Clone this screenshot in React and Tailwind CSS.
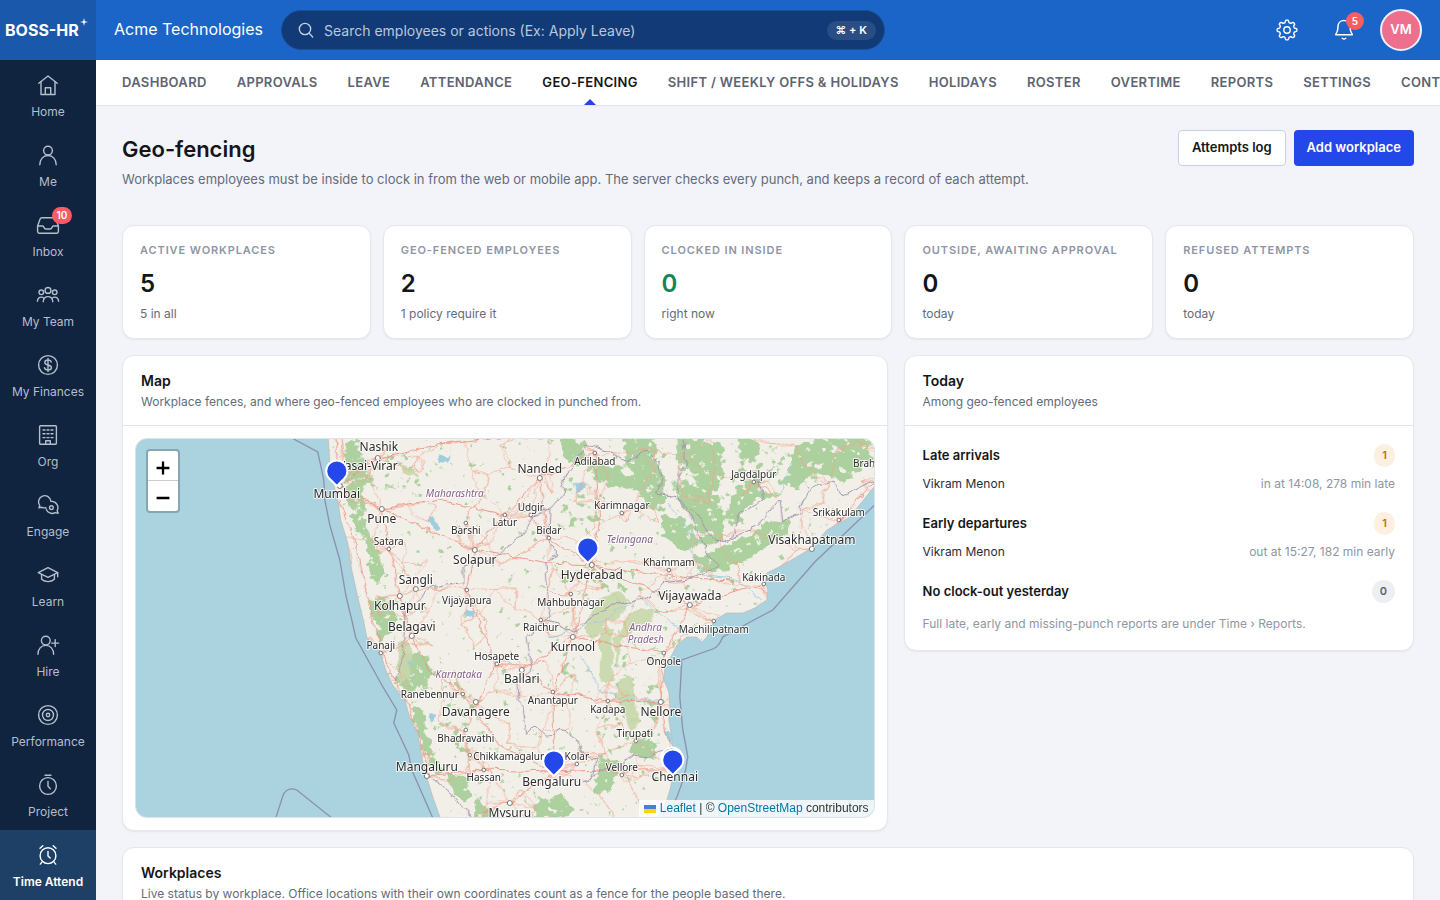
const SIDEBAR = [
  { label: 'Home', icon: 'home' },
  { label: 'Me', icon: 'me' },
  { label: 'Inbox', icon: 'inbox', badge: 10 },
  { label: 'My Team', icon: 'team' },
  { label: 'My Finances', icon: 'finances' },
  { label: 'Org', icon: 'org' },
  { label: 'Engage', icon: 'engage' },
  { label: 'Learn', icon: 'learn' },
  { label: 'Hire', icon: 'hire' },
  { label: 'Performance', icon: 'performance' },
  { label: 'Project', icon: 'project' },
  { label: 'Time Attend', icon: 'time', active: true },
];

const TABS = [
  'Dashboard', 'Approvals', 'Leave', 'Attendance', 'Geo-fencing', 'Shift / Weekly Offs & Holidays',
  'Holidays', 'Roster', 'Overtime', 'Reports', 'Settings', 'Contractors',
];

const STATS = [
  { label: 'Active workplaces', value: 5, note: '5 in all' },
  { label: 'Geo-fenced employees', value: 2, note: '1 policy require it' },
  { label: 'Clocked in inside', value: 0, note: 'right now', good: true },
  { label: 'Outside, awaiting approval', value: 0, note: 'today' },
  { label: 'Refused attempts', value: 0, note: 'today' },
];

const TODAY = [
  { title: 'Late arrivals', count: 1, rows: [{ name: 'Vikram Menon', detail: 'in at 14:08, 278 min late' }] },
  { title: 'Early departures', count: 1, rows: [{ name: 'Vikram Menon', detail: 'out at 15:27, 182 min early' }] },
  { title: 'No clock-out yesterday', count: 0, rows: [] },
];

const ICONS = {
  home: (
    <>
      <path d="M2.8 10.2 12 3l9.2 7.2" />
      <path d="M5 8.8v12.7h14V8.8" />
      <path d="M9.3 21.3v-6.5h5.4v6.5" />
    </>
  ),
  me: (
    <>
      <circle cx="12" cy="7.6" r="4.4" />
      <path d="M3.8 21.8c0-5.4 3.3-9.3 8.2-9.3s8.2 3.9 8.2 9.3" />
    </>
  ),
  inbox: (
    <>
      <path d="M1.6 13 4 6.2C4.4 5 5 4.7 6 4.7h12c1 0 1.6.3 2 1.5l2.4 6.8v5.6c0 1-.6 1.6-1.6 1.6H3.2c-1 0-1.6-.6-1.6-1.6z" />
      <path d="M1.6 13h5c.9 0 1 .5 1.3 1.3.4 1.2 1.1 1.7 2.1 1.7h4c1 0 1.7-.5 2.1-1.7.3-.8.4-1.3 1.3-1.3h5" />
    </>
  ),
  team: (
    <>
      <circle cx="12" cy="7.4" r="2.9" />
      <circle cx="5.3" cy="9.3" r="2.3" />
      <circle cx="18.7" cy="9.3" r="2.3" />
      <path d="M7.2 18.8c.3-3.2 2-5.2 4.8-5.2s4.5 2 4.8 5.2" />
      <path d="M1.4 18.3c.2-2.5 1.7-4.2 3.9-4.2 1.1 0 1.9.4 2.6 1.1M22.6 18.3c-.2-2.5-1.7-4.2-3.9-4.2-1.1 0-1.9.4-2.6 1.1" />
    </>
  ),
  finances: (
    <>
      <circle cx="12" cy="12" r="9.4" />
      <path d="M12 5.5v13M15.2 9c-.3-1.3-1.5-2-3.2-2-1.8 0-3.2.9-3.2 2.4 0 3.4 6.6 1.7 6.6 5.1 0 1.6-1.5 2.5-3.4 2.5s-3.2-.8-3.5-2.3" />
    </>
  ),
  org: (
    <>
      <rect x="3.6" y="2.7" width="16.8" height="18.6" rx="1" />
      <path d="M7 7h2M11 7h2M15 7h2M7 10.8h2M11 10.8h2M15 10.8h2M7 14.6h2M11 14.6h2M15 14.6h2" />
      <path d="M9.7 21.3v-3.6h4.6v3.6" />
    </>
  ),
  engage: (
    <>
      <path d="M14.9 8.3A6.2 6.2 0 1 0 3.8 12.6L2.9 14.8l3-.5c1.2.6 2.7.7 4 .3" />
      <path d="M15.3 8.4a6.2 6.2 0 0 1 5.8 9.2l1.1 2.6-3.1-.6a6.2 6.2 0 0 1-9-3.7" />
      <circle cx="15.4" cy="14.6" r="1.9" />
    </>
  ),
  learn: (
    <>
      <path d="M2.3 9.7 12 4.7l9.7 5L12 14.3z" />
      <path d="M5.6 11.5v4.8c3.4 3.1 9.4 3.1 12.8 0v-4.8M21.7 9.7v4" />
    </>
  ),
  hire: (
    <>
      <circle cx="9.8" cy="7.6" r="4.4" />
      <path d="M2 21.2c0-5.1 3.1-8.8 7.8-8.8s7.8 3.7 7.8 8.8M19.2 6.6v7M15.7 10.1h7" />
    </>
  ),
  performance: (
    <>
      <circle cx="12" cy="12" r="9.4" />
      <circle cx="12" cy="12" r="5.5" />
      <circle cx="12" cy="12" r="1.7" />
    </>
  ),
  project: (
    <>
      <circle cx="12" cy="13" r="8.4" />
      <path d="M9 2.2h6M12 8.5v4.7l2.3 2.6" />
    </>
  ),
  time: (
    <>
      <circle cx="12" cy="12.7" r="7.9" />
      <path d="M12 8.5v4.4l2.2 2.2M4 5.3l2.8-2.5M20 5.3l-2.8-2.5M6.3 18.6l-2 2.5M17.7 18.6l2 2.5" />
    </>
  ),
};

// Map drawing, in the map's own 738 x 378 space shifted by MAP_ORIGIN
const MAP_ORIGIN = 'translate(-136 -439)';

const LAND =
  'M328 430L330 463 334 485 338 500 341 520 348 543 352 570 358 597 364 622 367 637 377 647 382 657 386 670 393 685 405 700 410 717 418 733 422 757 427 777 433 797 443 825' +
  'L654 825 667 800 670 790 675 770 673 747 671 733 669 720 670 707 669 692 664 680 665 667 672 655 677 645 687 637 697 637 702 642 707 637 713 623 718 618 727 613 743 613 755 608 767 600 768 590 765 582 767 573 783 565 812 548 827 530 850 517 862 502 880 480V430Z';

const MARITIME = [
  'M292 438 318 452 324 480 325 500 330 525 340 560 346 595 350 612 352 620 356 638 382 685 397 710 394 723 409 755 412 770 433 818',
  'M276 818 283 796Q287 786 297 790L332 818',
  'M876 504 815 562 773 610 754 620 723 637Q719 647 713 649L682 660 680 697 683 730Q686 745 688 757 685 782 672 808',
];

const BORDERS = [
  'M585 443 583 452 567 472 562 487 565 493 550 510 533 515 520 538 510 545 497 557 482 563 463 567 463 582 445 583 430 588 420 600 404 613 403 640 402 667 393 681',
  'M550 510 549 540 556 556 545 563 546 580 548 597 550 617 533 633 527 637 530 655 533 670 517 683 518 697 523 707 527 735 536 726 550 737 560 728 577 740 580 753 597 757 593 780 583 784',
  'M548 620 575 632 590 618 613 605 640 600 650 597 663 583 687 580 700 574 720 566 705 552 703 545 697 530 687 510 677 497 658 493 662 480 660 463 647 450 627 462 610 452 583 443',
  'M683 438 687 463 677 480 677 497 700 518 717 543 733 537 740 513 763 500 759 480 775 466',
  'M717 543 730 540 757 527 770 512 780 500 783 520 800 513 805 498 813 487 833 480 843 497 858 488 875 480',
  'M663 750 650 757 633 755 620 766 600 770 593 780M433 780 450 793 460 806 475 818',
];

// Dense cover, drawn as loose outlines and broken up by the noise filter
const FOREST = [
  'M590 460 620 465 645 490 610 488 592 478Z',
  'M560 438 590 440 582 465 566 462Z',
  'M622 438H655L662 475 668 490 660 515 645 505 630 470Z',
  'M676 438H722L724 480 712 494 694 484 690 470 678 470Z',
  'M676 478 690 484 722 498 722 520 727 540 706 548 692 520 676 500Z',
  'M738 486 756 478 764 496 745 510 736 528 722 520Z',
  'M738 438 760 438 756 462 742 458Z',
  'M795 445 822 438H870V466L845 480 820 474 800 488 783 490Z',
  'M662 515 688 520 700 545 682 552 664 538Z',
  'M692 560 725 545 750 535 770 520 790 520 790 530 768 545 745 562 725 572 700 572Z',
  'M400 655 420 652 432 665 428 690 405 692 396 680Z',
  'M345 440 358 440 368 475 362 510 372 540 385 570 382 590 372 580 366 545 350 515 346 480Z',
  'M368 600 392 596 396 630 380 640Z',
  'M411 700 425 712 432 750 445 770 438 775 424 755 414 725Z',
  'M448 772 466 775 472 795 462 800 450 788Z',
  'M472 795 484 804 500 818 475 818Z',
  'M535 800 560 795 575 810 570 818 530 818Z',
  'M600 755 620 760 612 790 594 800 596 775Z',
  'M640 735 655 742 660 755 646 762 632 752Z',
];

const SCRUB = [
  'M560 570 600 560 630 585 640 610 610 600 585 600Z',
  'M360 450 385 470 400 490 372 490Z',
  'M560 645 580 660 575 700 562 690Z',
  'M615 640 632 660 640 735 622 725 610 690Z',
  'M430 660 470 680 490 740 470 770 440 730Z',
  'M640 670 660 690 662 720 645 740Z',
  'M560 480 600 490 600 530 560 530Z',
  'M385 450 420 460 420 490 395 490Z',
  'M590 705 625 720 640 760 600 745Z',
  'M730 440 790 445 780 500 740 500Z',
];

const HILLS = [
  'M598 600 616 590 628 598 622 618 606 622 594 640 584 630Z',
  'M600 628 612 628 614 680 600 682Z',
  'M618 680 630 676 640 722 632 730 618 700Z',
  'M630 612 655 608 650 622 634 628 622 640 618 670 614 640Z',
  'M398 640 412 645 410 680 398 682Z',
  'M400 463 412 468 418 478 404 472Z',
];

const LAKES = [
  'M438 455 446 458 450 454 448 463 440 462Z',
  'M574 484 580 482 586 486 578 491Z',
  'M425 520 434 518 441 528 436 530 430 524Z',
  'M466 610 476 610 472 617 464 614Z',
  'M430 714 438 716 432 724Z',
  'M666 730 671 732 671 744 667 742Z',
  'M408 660 413 661 411 667Z',
];

const RIVERS = [
  'M668 505 682 520 690 532 700 545',
  'M790 462 787 478 780 495',
  'M548 637 562 634 580 624 600 622 640 598 655 612 690 635',
  'M497 662 505 660 520 668M580 655 600 690 625 700 665 700',
  'M690 545 705 575 735 578 762 600',
];

const CITIES = [
  ['Nashik', 379, 451, 12, 378, 458],
  ['Vasai-Virar', 368, 470, 12, 340, 470],
  ['Mumbai', 337, 498, 12, 340, 486],
  ['Pune', 382, 523, 12, 382, 509],
  ['Satara', 389, 545, 10, 389, 549],
  ['Barshi', 466, 534, 10, 466, 523],
  ['Latur', 505, 526, 10, 505, 515],
  ['Udgir', 531, 511, 10, 531, 515],
  ['Solapur', 475, 564, 12, 475, 550],
  ['Sangli', 416, 584, 12, 416, 589],
  ['Kolhapur', 400, 610, 12, 400, 596],
  ['Vijayapura', 467, 604, 10, 467, 590],
  ['Belagavi', 412, 631, 12, 412, 636],
  ['Panaji', 381, 649, 10, 381, 653],
  ['Nanded', 540, 473, 12, 540, 478],
  ['Adilabad', 595, 465, 10, 595, 453],
  ['Karimnagar', 622, 509, 10, 622, 513],
  ['Bidar', 549, 534, 10, 549, 538],
  ['Hyderabad', 592, 579, 12, 592, 565],
  ['Khammam', 669, 566, 10, 669, 570],
  ['Mahbubnagar', 571, 606, 10, 571, 594],
  ['Vijayawada', 690, 600, 12, 690, 605],
  ['Jagdalpur', 754, 478, 10, 754, 482],
  ['Brahmapur', 880, 467, 10, 890, 470],
  ['Srikakulam', 839, 516, 10, 839, 520],
  ['Visakhapatnam', 812, 544, 12, 812, 549],
  ['Kakinada', 764, 581, 10, 764, 584],
  ['Machilipatnam', 714, 633, 10, 714, 621],
  ['Raichur', 541, 631, 10, 541, 620],
  ['Kurnool', 573, 651, 12, 573, 637],
  ['Ongole', 664, 665, 10, 664, 653],
  ['Hosapete', 497, 660, 10, 497, 664],
  ['Ballari', 522, 683, 12, 522, 670],
  ['Ranebennur', 430, 698, 10, 463, 694],
  ['Davanagere', 476, 716, 12, 476, 702],
  ['Anantapur', 553, 704, 10, 553, 692],
  ['Kadapa', 608, 713, 10, 608, 701],
  ['Nellore', 661, 716, 12, 661, 702],
  ['Tirupati', 635, 737, 10, 636, 741],
  ['Bhadravathi', 466, 742, 10, 466, 730],
  ['Chikkamagaluru', 512, 760, 10, 470, 755],
  ['Kolar', 577, 760, 10, 577, 764],
  ['Vellore', 622, 771, 10, 622, 775],
  ['Mangaluru', 427, 771, 12, 427, 776],
  ['Hassan', 484, 781, 10, 484, 770],
  ['Bengaluru', 552, 786, 12, 554, 772],
  ['Chennai', 675, 781, 12, 672, 770],
  ['Mysuru', 510, 817, 12, 510, 803],
];

const STATES = [
  ['Maharashtra', 455, 497],
  ['Telangana', 630, 543],
  ['Andhra', 646, 631],
  ['Pradesh', 646, 643],
  ['Karnataka', 459, 678],
];

const PINS = [
  ['Mumbai office', 337, 486],
  ['Hyderabad office', 588, 563],
  ['Bengaluru office', 554, 776],
  ['Chennai warehouse', 672, 773],
  ['Chennai office', 673, 775],
];

// Roads: every town and junction is joined to its nearest neighbours by a slightly bent line
function buildRoads() {
  const nodes = CITIES.map((c) => [c[4], c[5]]);
  for (let row = 0; row < 15; row++) {
    for (let col = 0; col < 20; col++) {
      const seed = Math.sin(row * 91.7 + col * 47.3) * 1000;
      const jitter = seed - Math.floor(seed);
      nodes.push([340 + col * 28 + jitter * 22, 436 + row * 28 + ((jitter * 7) % 1) * 22]);
    }
  }
  const parts = [];
  nodes.forEach(([x, y], i) => {
    nodes
      .map(([nx, ny], j) => ({ j, nx, ny, d: Math.hypot(nx - x, ny - y) }))
      .filter((n) => n.j !== i)
      .sort((a, b) => a.d - b.d)
      .slice(0, i < CITIES.length ? 5 : 2)
      .forEach(({ nx, ny, j }) => {
        const bend = ((i * 7 + j * 3) % 9) - 4;
        parts.push(`M${x.toFixed(1)} ${y.toFixed(1)}Q${((x + nx) / 2 + bend).toFixed(1)} ${((y + ny) / 2 - bend).toFixed(1)} ${nx.toFixed(1)} ${ny.toFixed(1)}`);
      });
  });
  return parts.join('');
}

const ROADS = buildRoads();

const TRUNK_ROADS = [
  'M340 486 382 509 430 530 475 550 549 563 592 565 640 572 690 578 735 580',
  'M340 486 378 458 430 446 500 438M340 486 335 438',
  'M382 509 389 549 400 596 412 636 430 670 463 694 500 745 554 772 600 770 672 770',
  'M592 565 573 637 553 692 554 772 510 803 470 818',
  'M690 605 664 653 661 702 672 770M690 605 764 584 812 549 875 482',
  'M592 565 600 520 595 453M592 565 690 605M475 550 467 590 497 664 476 702',
  'M540 478 505 515 475 550M540 478 595 453M540 478 549 538 592 565M382 509 440 500 505 515',
  'M522 670 553 692 608 701 661 702M522 670 573 637 664 653M427 776 484 770 554 772M340 500 360 560 372 620 388 668 415 720 430 776',
];

function gearPath() {
  const steps = 96;
  const pts = [];
  for (let i = 0; i < steps; i++) {
    const a = (i / steps) * Math.PI * 2;
    const r = 8.7 + 1.2 * Math.tanh(2.2 * Math.cos(8 * a));
    pts.push(`${(12 + r * Math.cos(a)).toFixed(2)} ${(12 + r * Math.sin(a)).toFixed(2)}`);
  }
  return `M${pts.join('L')}Z`;
}

function Icon({ children, className = 'size-6', width = 1.4 }) {
  return (
    <svg viewBox="0 0 24 24" aria-hidden="true" className={className} fill="none" stroke="currentColor" strokeWidth={width} strokeLinecap="round" strokeLinejoin="round">
      {children}
    </svg>
  );
}

function Sidebar() {
  return (
    <aside className="flex w-24 shrink-0 flex-col overflow-hidden bg-[#10233f]">
      <a href="#home" className="flex h-[60px] shrink-0 items-center bg-[#1a58ac] pl-[5px] text-base font-bold text-white">
        BOSS-HR
        <svg viewBox="0 0 8 8" aria-hidden="true" className="mb-4 ml-px size-2" fill="currentColor">
          <path d="M4 0 4.800 3.200 8 4 4.800 4.800 4 8 3.200 4.800 0 4 3.200 3.200Z" />
        </svg>
      </a>
      <nav aria-label="Main">
        {SIDEBAR.map((item) => (
          <a
            key={item.label}
            href={`#${item.icon}`}
            className={`flex h-[70px] flex-col items-center pt-[13px] text-xs ${item.active ? 'bg-[#1f4066] font-semibold text-white' : 'text-[#b4bfcc]'}`}
          >
            <span className="relative">
              <Icon>{ICONS[item.icon]}</Icon>
              {item.badge && (
                <span className="absolute -top-[6px] left-4 flex h-[17px] min-w-5 items-center justify-center rounded-full bg-[#fb5b62] px-1 text-[10px] font-semibold text-white">
                  {item.badge}
                </span>
              )}
            </span>
            <span className="mt-[7px] whitespace-nowrap">{item.label}</span>
          </a>
        ))}
      </nav>
    </aside>
  );
}

function TopBar() {
  return (
    <header className="flex h-[60px] shrink-0 items-center bg-[#1b65c8] px-[18px]">
      <span className="shrink-0 pb-[2px] text-base text-white">Acme Technologies</span>
      <label className="ml-[18px] flex h-10 w-full max-w-[604px] items-center rounded-full border border-[#1f4e92] bg-[#113a76] pr-2 pl-4 text-[#c5d3e8]">
        <Icon className="size-4 shrink-0" width={2}>
          <circle cx="10.5" cy="10.5" r="8.5" />
          <path d="m17 17 5 5.5" />
        </Icon>
        <input
          type="search"
          aria-label="Search employees or actions"
          placeholder="Search employees or actions (Ex: Apply Leave)"
          className="ml-[10px] min-w-0 flex-1 bg-transparent pt-px text-sm text-white outline-none placeholder:text-[#b9c8de]"
        />
        <kbd className="rounded-full bg-[#2a4e84] px-[9px] font-[Inter,'DejaVu_Sans',sans-serif] text-[11px] leading-[19px] font-semibold text-white">⌘ + K</kbd>
      </label>
      <div className="ml-auto flex shrink-0 items-center text-white">
        <button type="button" aria-label="Settings">
          <Icon>
            <path d={gearPath()} />
            <circle cx="12" cy="12" r="3.2" />
          </Icon>
        </button>
        <button type="button" aria-label="Notifications" className="relative ml-[33px]">
          <Icon width={1.5}>
            <path d="M12 2.6c-3.6 0-6 2.7-6 6.2 0 4.2-1 6-2.3 7.9h16.6c-1.3-1.9-2.3-3.7-2.3-7.9 0-3.5-2.4-6.2-6-6.2ZM10.3 20.2c1 .9 2.4.9 3.4 0" />
          </Icon>
          <span className="absolute -top-[6px] left-[14px] flex size-[18px] items-center justify-center rounded-full bg-[#fb5b62] text-[10px] font-semibold">5</span>
        </button>
        <button type="button" aria-label="Account" className="ml-6 flex size-[42px] items-center justify-center rounded-full border-2 border-[#eef0fb] bg-[#ee6e8e] text-[13px] font-semibold">
          VM
        </button>
      </div>
    </header>
  );
}

function Tabs() {
  return (
    <nav aria-label="Time Attend" className="flex h-[46px] shrink-0 gap-[30px] overflow-hidden border-b border-[#e1e4ec] bg-white px-[26px] text-[13px] font-semibold tracking-wide whitespace-nowrap uppercase">
      {TABS.map((tab) => {
        const active = tab === 'Geo-fencing';
        return (
          <a key={tab} href={`#${tab}`} className={`relative leading-[45px] ${active ? 'text-[#14161a]' : 'text-[#5d6472]'}`}>
            {tab}
            {active && <span className="absolute bottom-0 left-1/2 -ml-[6px] border-x-[6px] border-b-[6px] border-x-transparent border-b-[#2742e6]" />}
          </a>
        );
      })}
    </nav>
  );
}

function Card({ className = '', children }) {
  return <section className={`rounded-xl border border-[#e4e7ee] bg-white shadow-[0_1px_2px_rgba(16,24,40,0.06)] ${className}`}>{children}</section>;
}

function CardHeader({ title, note }) {
  return (
    <div className="border-b border-[#e1e4ea] px-[18px] py-[15px]">
      <h2 className="text-sm leading-5 font-semibold text-[#14161a]">{title}</h2>
      <p className="mt-[2px] text-xs leading-[17px] text-[#646b7a]">{note}</p>
    </div>
  );
}

function WorkplaceMap() {
  return (
    <div className="relative h-[380px] overflow-hidden rounded-xl border border-[#dfe2e8] bg-[#aad3df]">
      <svg viewBox="0 0 738 378" preserveAspectRatio="xMidYMid slice" className="h-full w-full font-['Noto_Sans',sans-serif]" role="img" aria-label="Workplace map">
        <defs>
          <clipPath id="land-clip"><path d={LAND} /></clipPath>
          <filter id="patchy" x="0" y="0" width="100%" height="100%" colorInterpolationFilters="sRGB">
            <feGaussianBlur in="SourceGraphic" stdDeviation="2" result="soft" />
            <feTurbulence type="fractalNoise" baseFrequency="0.13" numOctaves="4" seed="7" result="noise" />
            <feColorMatrix in="noise" type="matrix" values="0 0 0 0 0 0 0 0 0 0 0 0 0 0 0 1 0 0 0 0" result="noiseAlpha" />
            <feComposite in="soft" in2="noiseAlpha" operator="arithmetic" k1="0" k2="0.6" k3="1" k4="0" result="sum" />
            <feComponentTransfer in="sum" result="mask">
              <feFuncA type="linear" slope="10" intercept="-7.6" />
            </feComponentTransfer>
            <feFlood floodColor="#add19e" />
            <feComposite operator="in" in2="mask" />
          </filter>
          <filter id="rough" x="-5%" y="-5%" width="110%" height="110%" colorInterpolationFilters="sRGB">
            <feTurbulence type="fractalNoise" baseFrequency="0.08" numOctaves="3" seed="3" />
            <feDisplacementMap in="SourceGraphic" scale="8" xChannelSelector="R" yChannelSelector="G" />
          </filter>
        </defs>
        <g transform={MAP_ORIGIN}>
          <path d={LAND} fill="#f2efe9" stroke="#b9a9a6" strokeWidth="0.5" />
          <g clipPath="url(#land-clip)">
            <g filter="url(#patchy)">
              <rect x="135" y="438" width="740" height="380" fill="#000" opacity="0.1" />
              {SCRUB.map((d) => <path key={d} d={d} fill="#000" opacity="0.24" />)}
              {FOREST.map((d) => <path key={d} d={d} fill="#000" opacity="0.8" />)}
            </g>
            <g filter="url(#rough)">
              {HILLS.map((d) => <path key={d} d={d} fill="#c8d7ab" opacity="0.9" />)}
              {LAKES.map((d) => <path key={d} d={d} fill="#9fcddc" />)}
              {RIVERS.map((d) => <path key={d} d={d} fill="none" stroke="#a5d0de" strokeWidth="1" />)}
              <path d={ROADS} fill="none" stroke="#f4a48c" strokeWidth="0.7" opacity="0.8" />
              {TRUNK_ROADS.map((d) => <path key={d} d={d} fill="none" stroke="#ee8f80" strokeWidth="0.9" />)}
              {BORDERS.map((d) => <path key={d} d={d} fill="none" stroke="#a394ad" strokeWidth="1" />)}
            </g>
          </g>
          {MARITIME.map((d) => <path key={d} d={d} fill="none" stroke="#8d8fae" strokeWidth="1.3" />)}
          {CITIES.map(([name, , , size, x, y]) => (
            <circle key={name} cx={x} cy={y} r={size > 10 ? 2.5 : 1.8} fill="#fff" stroke="#6b6b6b" strokeWidth="0.9" />
          ))}
          <g textAnchor="middle" stroke="#fff" strokeOpacity="0.8" strokeWidth="2" strokeLinejoin="round" paintOrder="stroke">
            {CITIES.map(([name, x, y, size]) => (
              <text key={name} x={x} y={y} fill="#2b2b2b" className={size > 10 ? 'text-[12px]' : 'text-[10px]'}>{name}</text>
            ))}
            {STATES.map(([name, x, y]) => (
              <text key={name} x={x} y={y} fill="#86608a" className="text-[10px] italic">{name}</text>
            ))}
          </g>
          {PINS.map(([name, x, y]) => (
            <path key={name} transform={`translate(${x} ${y})`} d="M0 0-7.5-7.5A10.6 10.6 0 1 1 7.5-7.5Z" fill="#2347e8" stroke="#fff" strokeWidth="2" strokeLinejoin="round">
              <title>{name}</title>
            </path>
          ))}
        </g>
      </svg>
      <div className="absolute top-[10px] left-[10px] flex flex-col rounded-sm border-2 border-[#86a7b2] bg-white text-black">
        <button type="button" aria-label="Zoom in" className="flex h-[30px] w-[30px] items-center justify-center border-b border-[#ccc] pt-1">
          <Icon className="size-[14px]" width={4}><path strokeLinecap="butt" d="M12 1v22M1 12h22" /></Icon>
        </button>
        <button type="button" aria-label="Zoom out" className="flex h-[30px] w-[30px] items-center justify-center pt-1">
          <Icon className="size-[14px]" width={4}><path strokeLinecap="butt" d="M1 12h22" /></Icon>
        </button>
      </div>
      <div className="absolute right-0 bottom-0 flex items-center bg-white/80 px-[5px] font-['Liberation_Sans',sans-serif] text-xs leading-[17px] whitespace-pre text-[#333]">
        <svg viewBox="0 0 12 8" aria-hidden="true" className="mr-1 h-2 w-3">
          <path d="M0 0h12v4H0z" fill="#4c7be1" />
          <path d="M0 4h12v4H0z" fill="#ffd500" />
        </svg>
        <a href="#leaflet" className="text-[#0078a8]">Leaflet</a>
        {' | © '}
        <a href="#osm" className="text-[#0078a8]">OpenStreetMap</a>
        {' contributors'}
      </div>
    </div>
  );
}

function TodayCard() {
  return (
    <Card className="self-start">
      <CardHeader title="Today" note="Among geo-fenced employees" />
      <div className="p-[18px]">
        {TODAY.map((group) => (
          <div key={group.title} className="mb-[18px] last-of-type:mb-0">
            <div className="flex items-start justify-between">
              <h3 className="text-[13px] leading-[22px] font-semibold text-[#14161a]">{group.title}</h3>
              <span className={`rounded-full px-2 text-[11px] leading-[23px] font-semibold ${group.count ? 'bg-[#fdf0e0] text-[#b9741a]' : 'bg-[#edeff3] text-[#5d6472]'}`}>
                {group.count}
              </span>
            </div>
            {group.rows.map((row) => (
              <div key={row.name} className="mt-[6px] mb-px flex items-center justify-between text-xs leading-[21px]">
                <span className="text-[#2a2d33]">{row.name}</span>
                <span className="text-[#9096a3]">{row.detail}</span>
              </div>
            ))}
          </div>
        ))}
        <p className="mt-3 text-xs leading-[17px] text-[#9096a3]">Full late, early and missing-punch reports are under Time › Reports.</p>
      </div>
    </Card>
  );
}

export default function App() {
  return (
    <div className="flex h-screen overflow-hidden bg-[#f3f4f9] font-[Inter,sans-serif] text-[#14161a]">
      <Sidebar />
      <div className="flex min-w-0 flex-1 flex-col">
        <TopBar />
        <Tabs />
        <main className="flex-1 overflow-y-auto px-[26px] pt-6 pb-8 [scrollbar-width:none]">
          <div className="flex items-start justify-between">
            <div>
              <h1 className="text-[22px] leading-[38px] font-semibold">Geo-fencing</h1>
              <p className="mt-px text-[13px] leading-5 text-[#646b7a]">
                Workplaces employees must be inside to clock in from the web or mobile app. The server checks every punch, and keeps a record of each attempt.
              </p>
            </div>
            <div className="flex shrink-0 gap-2 text-[13px] font-semibold">
              <button type="button" className="h-9 rounded border border-[#cdd1db] bg-white px-[13px]">Attempts log</button>
              <button type="button" className="h-9 rounded bg-[#2347e8] px-[13px] text-white">Add workplace</button>
            </div>
          </div>

          <div className="mt-9 grid grid-cols-5 gap-3">
            {STATS.map((stat) => (
              <Card key={stat.label} className="px-[17px] py-4">
                <p className="text-[11px] leading-4 font-semibold tracking-[0.9px] whitespace-nowrap text-[#8f95a5] uppercase">{stat.label}</p>
                <p className={`mt-[10px] text-2xl leading-8 font-semibold ${stat.good ? 'text-[#12855a]' : ''}`}>{stat.value}</p>
                <p className="mt-[5px] text-xs leading-[17px] text-[#646b7a]">{stat.note}</p>
              </Card>
            ))}
          </div>

          <div className="mt-4 grid grid-cols-[3fr_2fr] gap-4">
            <Card>
              <CardHeader title="Map" note="Workplace fences, and where geo-fenced employees who are clocked in punched from." />
              <div className="p-3">
                <WorkplaceMap />
              </div>
            </Card>
            <TodayCard />
          </div>

          <Card className="mt-4">
            <CardHeader title="Workplaces" note="Live status by workplace. Office locations with their own coordinates count as a fence for the people based there." />
          </Card>
        </main>
      </div>
    </div>
  );
}
